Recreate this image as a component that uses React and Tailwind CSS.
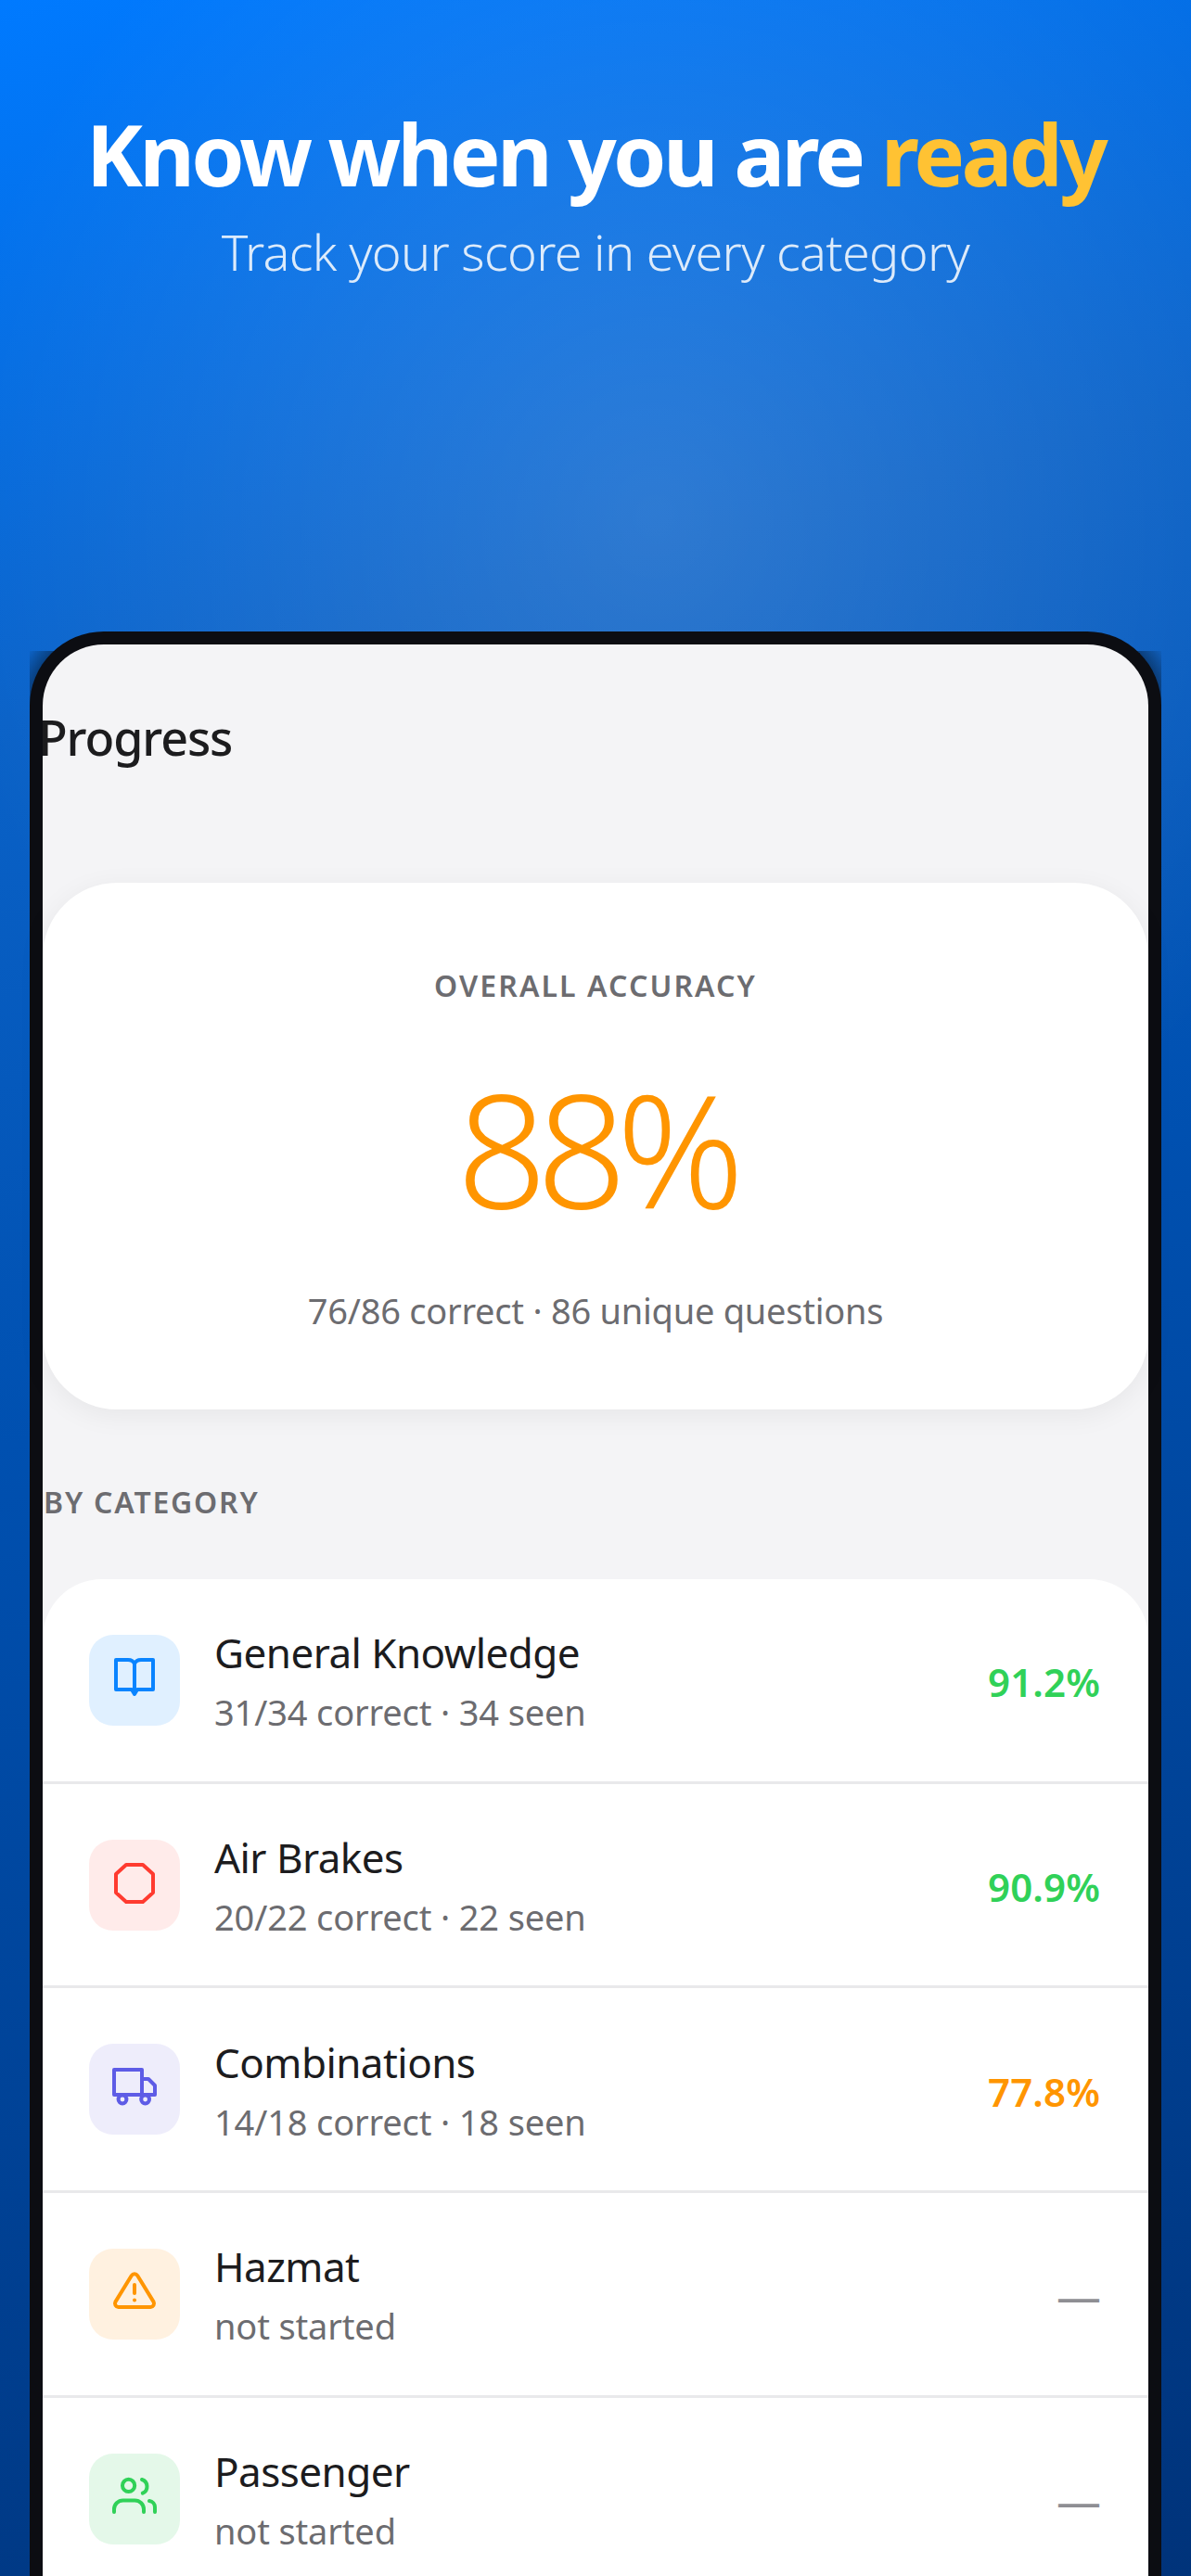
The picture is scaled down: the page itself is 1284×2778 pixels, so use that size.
const rows = [
  { name: "General Knowledge", sub: "31/34 correct · 34 seen", pct: "91.2%", color: "text-[#30d158]", bg: "bg-[#e0f0ff]", icon: "book" },
  { name: "Air Brakes", sub: "20/22 correct · 22 seen", pct: "90.9%", color: "text-[#30d158]", bg: "bg-[#ffebea]", icon: "octagon" },
  { name: "Combinations", sub: "14/18 correct · 18 seen", pct: "77.8%", color: "text-[#ff9500]", bg: "bg-[#eeedfb]", icon: "truck" },
  { name: "Hazmat", sub: "not started", icon: "warning", bg: "bg-[#fff1e0]" },
  { name: "Passenger", sub: "not started", icon: "people", bg: "bg-[#e4f8e9]" },
];

const Icon = ({ type }) => {
  const base = { width: 48, height: 48, viewBox: "0 0 24 24", fill: "none", strokeWidth: 2, strokeLinejoin: "round", strokeLinecap: "round" };
  if (type === "book") {
    return (
      <svg {...base} stroke="#0a84ff">
        <path d="M2 1h6.5c1.7 0 3 .8 3.5 2.2C12.5 1.800 13.800 1 15.500 1H22v16h-8.500L12 19.500 10.500 17H2z" />
        <path d="M12 3.200V17" />
      </svg>
    );
  }
  if (type === "octagon") {
    return (
      <svg {...base} stroke="#ff3b30">
        <polygon points="7.500 1 16.500 1 22 6 22 16 16.500 21 7.500 21 2 16 2 6" />
      </svg>
    );
  }
  if (type === "truck") {
    return (
      <svg {...base} stroke="#5e5ce6">
        <path d="M1 1.500h15V15H1z" />
        <path d="M16 6.500h3.500L23 10v5h-7" />
        <circle cx="5.500" cy="17.500" r="2.200" fill="#eeedfb" />
        <circle cx="17.800" cy="17.500" r="2.200" fill="#eeedfb" />
      </svg>
    );
  }
  if (type === "warning") {
    return (
      <svg {...base} stroke="#ff9500">
        <path d="M10.400 2 1.700 16.200a1.900 1.900 0 0 0 1.600 2.800h17.400a1.900 1.900 0 0 0 1.600-2.800L13.600 2a1.900 1.900 0 0 0-3.200 0z" />
        <path d="M12 7v4.500" />
        <path d="M12 15.300h.01" />
      </svg>
    );
  }
  return (
    <svg {...base} stroke="#30d158">
      <path d="M1 19v-1.500a4.800 4.800 0 0 1 4.800-4.800h6.400a4.800 4.800 0 0 1 4.800 4.800V19" />
      <circle cx="8.800" cy="4.700" r="3.300" />
      <path d="M16 1.500a3.900 3.900 0 0 1 .4 7.300" />
      <path d="M20 13a3.500 3.500 0 0 1 3 3.500V19" />
    </svg>
  );
};

const Row = ({ row }) => (
  <div className="flex h-[220.7px] items-center border-b-[3px] border-[#e9e9eb] pr-[52px] pl-[50px]">
    <div className={`flex h-[98px] w-[98px] shrink-0 items-center justify-center rounded-[26px] ${row.bg}`}>
      <Icon type={row.icon} />
    </div>
    <div className="ml-[37px] flex-1">
      <div className="mt-[1px] text-[44px] leading-[58px] tracking-[-0.55px] text-[#1c1c1e]">{row.name}</div>
      <div className="mt-[10px] text-[38px] leading-[50px] tracking-[-0.15px] text-[#6c6c70]">{row.sub}</div>
    </div>
    {row.pct ? (
      <div className={`mt-[4px] text-[42px] font-semibold tracking-[0.1px] ${row.color}`}>{row.pct}</div>
    ) : (
      <div className="-mr-[1px] mt-[4px] text-[48px] text-[#8e8e93]">—</div>
    )}
  </div>
);

export default function App() {
  return (
    <div className="relative h-[2778px] w-[1284px] overflow-hidden bg-[radial-gradient(ellipse_60%_30%_at_55%_20%,rgba(255,255,255,0.15),transparent),linear-gradient(165deg,#007aff_0%,#0a62c8_25%,#0050b0_50%,#00337a_100%)] font-['Noto_Sans','Open_Sans',sans-serif]">
      <div className="pt-[110px] text-center">
        <h1 className="text-[92px] leading-[112px] font-bold tracking-[-3.7px] text-white">
          Know when you are <span className="text-[#ffc233]">ready</span>
        </h1>
        <p className="mt-[14px] text-[54px] leading-[70px] font-light tracking-[-0.7px] text-white/85">Track your score in every category</p>
      </div>
      {/* dark square corners peeking out behind the phone frame */}
      <div className="absolute top-[702px] left-[32px] h-[100px] w-[1220px] bg-[radial-gradient(circle_at_80px_59px,rgba(0,0,0,0.4)_78px,rgba(0,0,0,0.03)_100px),radial-gradient(circle_at_530px_59px,rgba(0,0,0,0.4)_78px,rgba(0,0,0,0.03)_100px)] bg-[length:50%_100%,50%_100%] bg-[position:left_top,right_top] bg-no-repeat" />
      <div className="relative mx-[32px] mt-[375px] h-[2200px] rounded-t-[80px] border-[14px] border-b-0 border-[#0c0d12] bg-[#f4f4f6]">
        <div className="h-[257px] overflow-hidden rounded-t-[66px] pt-[65px]">
          <h2 className="-ml-[5px] text-[52px] leading-[70px] font-medium tracking-[-1.1px] text-[#1c1c1e]">Progress</h2>
        </div>
        <div className="flex h-[568px] flex-col items-center rounded-[80px] bg-white pt-[89px] shadow-[0_6px_30px_rgba(0,0,0,0.06)]">
          <div className="text-[32px] leading-[44px] font-semibold tracking-[2.1px] text-[#6c6c70]">OVERALL ACCURACY</div>
          <div className="mt-[52px] text-[170px] leading-[200px] font-light tracking-[-11px] text-[#ff9500]">88%</div>
          <div className="mt-[51px] text-[38px] leading-[50px] tracking-[-0.25px] text-[#6c6c70]">76/86 correct · 86 unique questions</div>
        </div>
        <div className="mt-[78px] ml-[1px] text-[32px] leading-[44px] font-semibold tracking-[1.8px] text-[#6c6c70]">BY CATEGORY</div>
        <div className="mt-[61px] rounded-t-[64px] bg-white">
          {rows.map((row) => (
            <Row key={row.name} row={row} />
          ))}
        </div>
      </div>
    </div>
  );
}
